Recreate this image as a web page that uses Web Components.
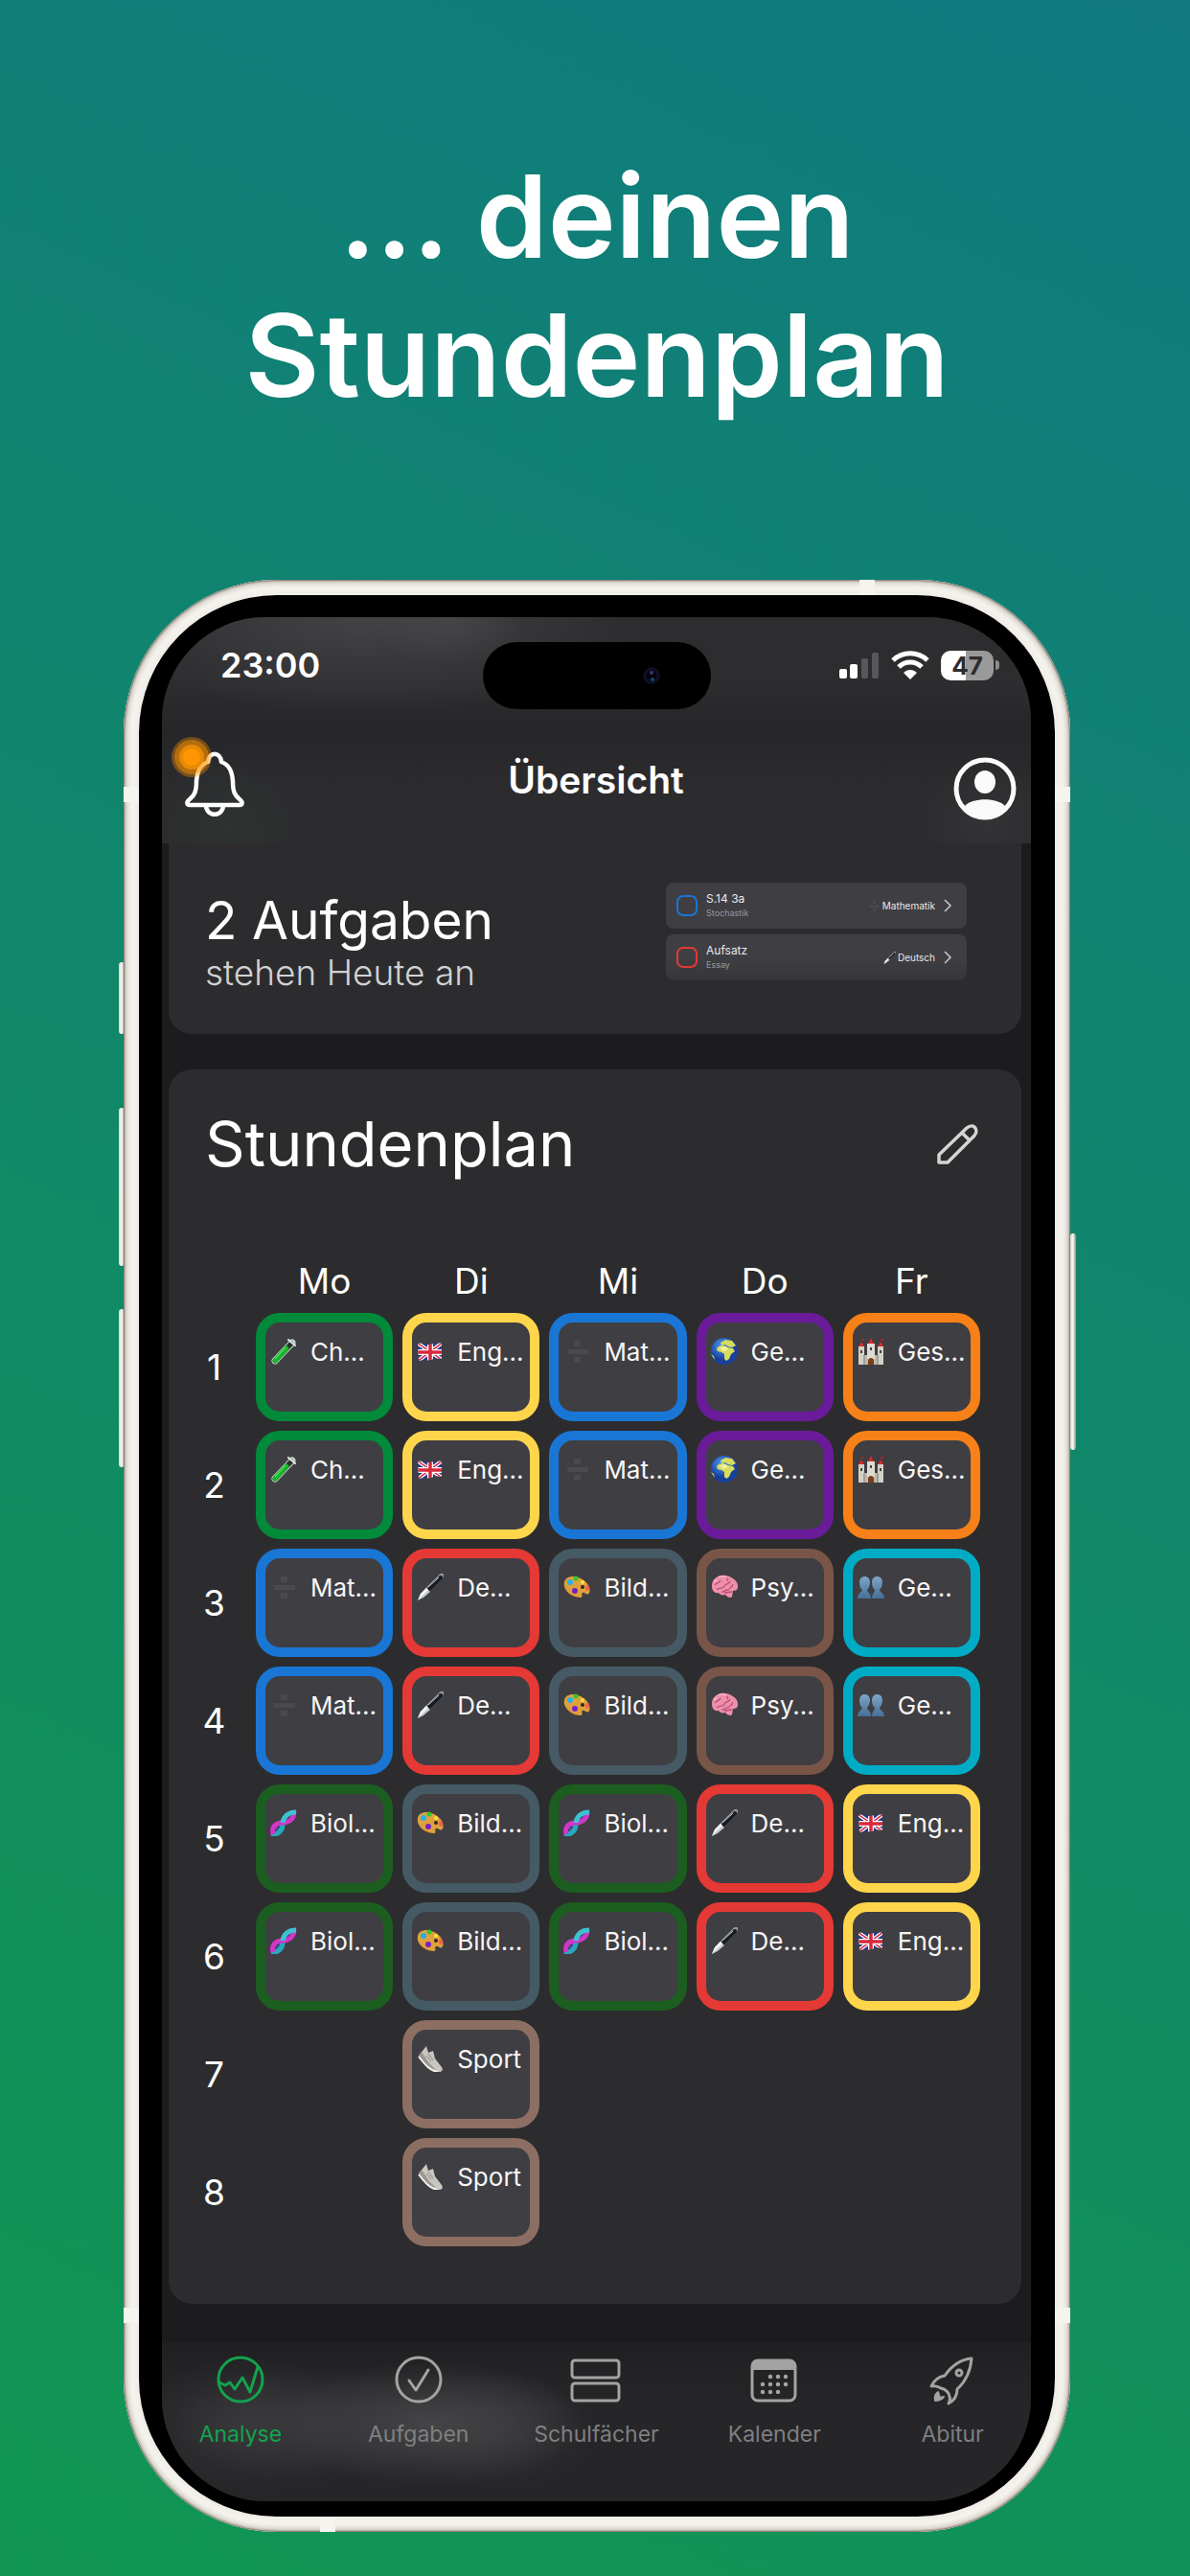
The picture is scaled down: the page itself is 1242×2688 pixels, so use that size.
<!DOCTYPE html>
<html lang="de">
<head>
<meta charset="utf-8">
<meta name="viewport" content="width=device-width, initial-scale=1">
<title>Stundenplan</title>
<style>
  body {
    margin: 0;
    min-height: 100vh;
    background: linear-gradient(205deg, #107a80, #119651);
    color: #fff;
    font-family: Inter, "Liberation Sans", sans-serif;
  }
</style>
</head>
<body>
<promo-page>
  <span slot="title">... deinen<br>Stundenplan</span>
  <phone-frame>
    <app-header page-title="Übersicht" time="23:00" battery="47"></app-header>
    <task-summary count="2"></task-summary>
    <time-table></time-table>
    <tab-bar></tab-bar>
  </phone-frame>
</promo-page>

<script>
// Emoji-artige Fachsymbole, alle auf einem Raster von 28x28
const ICONS = {
  tube: `<path d="M23 5 5 24" stroke="#c4d4c8" stroke-width="7" stroke-linecap="round"/><path d="M22 6 5 24" stroke="#28302b" stroke-width="5" stroke-linecap="round"/><path d="M17 11 5 24" stroke="#12b928" stroke-width="5" stroke-linecap="round"/><path d="M16 10 5 22" stroke="#7ef07c" stroke-width="1"/><path d="m19 2 7 6" stroke="#dfe5e2" stroke-width="2" stroke-linecap="round"/>`,
  flag: `<clipPath id="f"><path d="M1 6c5-2 9 2 13 1s8-2 12-1v16c-5-1-8 0-12 1s-9 0-12 1z"/></clipPath><g clip-path="url(#f)"><path fill="#233a8c" d="M0 3h28v22H0z"/><path d="m0 5 28 19M28 4 0 25" stroke="#fff" stroke-width="4"/><path d="m0 5 28 19M28 4 0 25" stroke="#d8283c" stroke-width="1.5"/><path d="M14 3v22M0 15h28" stroke="#fff" stroke-width="6"/><path d="M14 3v22M0 15h28" stroke="#d8283c" stroke-width="3.5"/></g>`,
  divide: `<path fill="#4a4a4b" d="M4 12h22v5H4zM11 3h7v6h-7zM11 20h7v6h-7z"/>`,
  pen: `<path d="M26 2 10 18" stroke="#8f979c" stroke-width="5" stroke-linecap="round"/><path d="M25 4 13 16" stroke="#181c22" stroke-width="4" stroke-linecap="round"/><path d="M23 4 12 14" stroke="#c4ccd2" stroke-width="1"/><path d="m10 15 4 4-7 6-6 3 3-7z" fill="#c3cbd0"/><path d="m10 15 2 2L1 28l3-7z" fill="#f3f5f6"/>`,
  palette: `<path d="M1 9C2 3 10 1 18 5s11 11 9 15-5-1-7 0 1 5-2 5C10 25-1 18 1 9z" fill="#dfa13d"/><path d="M1 11C2 19 9 25 18 25c-8 1-16-5-17-14z" fill="#a86d20"/><circle cx="20" cy="14" r="2" fill="#33261e"/><circle cx="7" cy="9" r="3" fill="#24b1e8"/><circle cx="13" cy="5" r="2.5" fill="#35c728"/><circle cx="20" cy="9" r="2" fill="#ffe135"/><ellipse cx="25" cy="15" rx="2" ry="3" fill="#f3604f"/><circle cx="12" cy="18" r="3" fill="#7721c5"/>`,
  globe: `<radialGradient id="g" cx=".4" cy=".3"><stop offset="0" stop-color="#4c9af2"/><stop offset="1" stop-color="#173f9c"/></radialGradient><circle cx="14" cy="14" r="14" fill="url(#g)"/><path d="M6 11c1-2 4-3 7-3l5 2 5 1 2 3-4 3-2 5-3 2-2-2v-5l-3-2-4-1zM10 5l5-3 7 1 4 5-4 2-4-1-3-2-4 1zM0 17l3 2 1 4z" fill="#d8dc5c"/><path d="m9 10 6-1 3 3-5 2z" fill="#f4f2a1"/>`,
  castle: `<path d="M1 9h6v19H1zM21 9h6v19h-6z" fill="#d3d0c6"/><path d="M6 18h16v10H6z" fill="#bdbab0"/><path d="M10 6h8v16h-8z" fill="#dedbd2"/><path d="m1 9 3-5 3 5zM21 9l3-5 3 5zM11 6l3-6 3 6z" fill="#d52b2b"/><path d="M4 1h3v2H4zM24 1h3v2h-3z" fill="#a82424"/><path d="M11 28v-4c0-4 6-4 6 0v4z" fill="#7b3f17"/><path d="M3 13h2v3H3zM23 13h2v3h-2zM13 10h2v3h-2z" fill="#42413f"/><path d="M7 18v10M21 18v10" stroke="#86847d"/>`,
  brain: `<path d="M1 13C1 5 8 1 15 2s14 6 13 12c0 3-2 4-5 4l-1 6c-1 2-5 1-7-2-3 1-6 0-7-2-4 1-7-2-7-7z" fill="#ee8fab"/><path d="M4 12c2-3 5-2 6-5m-4 10c2-3 6 0 8-4s5-1 6-5m-9 11c3 1 4-3 8-2m-3-12c2 1 2 2 1 3m6 3c-1 4-3 3-4 5m-5 4c3 0 5-1 8-1" fill="none" stroke="#bd4f78" stroke-width="1.3"/><path d="M8 4c3-2 6-1 8 0M3 9l3-3" stroke="#ffd0db" fill="none"/>`,
  people: `<linearGradient id="p" x2="0" y2="1"><stop stop-color="#7fa6c6"/><stop offset="1" stop-color="#456f98"/></linearGradient><g fill="url(#p)"><path d="M2 9c0-8 11-8 11 0 0 4-2 7-3 8 0 3 4 3 4 9H0c0-5 4-6 5-9C3 16 2 13 2 9z"/><path d="M15 9c0-8 11-8 11 0 0 4-2 7-3 8 0 3 5 3 5 9H15c0-5 3-6 3-9-2-2-3-4-3-8z"/></g>`,
  dna: `<path d="m5 18 5 6M18 5l6 6M8 16l4 5M16 8l5 5" stroke="#5848b4" stroke-width="2"/><path d="M1 26c6 1 12-3 12-10" fill="none" stroke="#25a9bf" stroke-width="5"/><path d="M3 26C1 19 5 14 13 14S25 9 25 2" fill="none" stroke="#d136c8" stroke-width="5"/><path d="M13 14c1-7 6-11 14-11" fill="none" stroke="#3cc3d0" stroke-width="5"/>`,
  shoe: `<path d="m2 11 8-10 2 7 5-2 2 8 7 9c2 3 0 5-3 5-6 0-9-4-13-8z" fill="#c9c5bf"/><path d="m2 11 3-4 8 12 9 9c-7 0-11-6-20-17z" fill="#9b9690"/><path d="M2 12c7 9 12 15 20 16" fill="none" stroke="#f2f0ed" stroke-width="2"/><path d="m12 9 5 7M10 11l5 6" stroke="#8c8882"/>`
};

const svg = (body, size = 28, view = size) =>
  `<svg width="${size}" height="${size}" viewBox="0 0 ${view} ${view}" fill="none" aria-hidden="true">${body}</svg>`;

// Fach -> Kurzname, Symbol, Farbe
const SUBJECTS = {
  ch: ["Ch...", "tube", "#008a3a"],
  en: ["Eng...", "flag", "#ffd54c"],
  ma: ["Mat...", "divide", "#1976d5"],
  geo: ["Ge...", "globe", "#6a1b9a"],
  his: ["Ges...", "castle", "#f78118"],
  de: ["De...", "pen", "#e53935"],
  ku: ["Bild...", "palette", "#455a64"],
  psy: ["Psy...", "brain", "#795548"],
  gem: ["Ge...", "people", "#00acc5"],
  bio: ["Biol...", "dna", "#1b5e20"],
  sp: ["Sport", "shoe", "#8d6e63"]
};

class BaseElement extends HTMLElement {
  constructor() {
    super();
    this.attachShadow({ mode: "open" });
  }
  connectedCallback() {
    this.shadowRoot.innerHTML = this.render();
  }
}

class PromoPage extends BaseElement {
  render() {
    return `
      <style>
        :host { display: block; padding: 153px 125px 44px 129px; }
        h1 {
          margin: 0 0 162px;
          font-size: 120px;
          font-weight: 600;
          line-height: 145px;
          text-align: center;
        }
      </style>
      <h1><slot name="title"></slot></h1>
      <slot></slot>
    `;
  }
}

class PhoneFrame extends BaseElement {
  render() {
    return `
      <style>
        :host { display: block; position: relative; }
        .frame {
          position: relative;
          padding: 16px;
          border-radius: 160px;
          background: #f1eee8;
          box-shadow: inset 0 0 2px 1px #756d63, inset 0 0 7px 4px #c9c2b8, inset 0 0 4px 10px #fbfaf6;
        }
        .bezel {
          padding: 23px 25px 16px 24px;
          border-radius: 144px;
          background: #000;
        }
        .screen {
          display: flex;
          flex-direction: column;
          overflow: hidden;
          border-radius: 108px;
          background: #1c1c1e;
        }
        /* Tasten und Antennenstreifen liegen auf dem Rahmen */
        .key, .band { position: absolute; }
        .key { width: 6px; background: linear-gradient(90deg, #d8d3ca, #fbfaf6, #8e867b); border-radius: 3px; }
        .left { left: -5px; }
        .right { right: -6px; }
        .action { top: 399px; height: 75px; }
        .up { top: 551px; height: 165px; }
        .down { top: 761px; height: 165px; }
        .power { top: 682px; height: 226px; }
        .band { width: 16px; height: 16px; background: #f6f4ef; }
      </style>
      <i class="key left action"></i><i class="key left up"></i><i class="key left down"></i>
      <i class="key right power"></i>
      <div class="frame">
        <i class="band" style="top:0;right:204px"></i>
        <i class="band" style="bottom:0;left:205px"></i>
        <i class="band" style="top:216px;left:0"></i>
        <i class="band" style="top:216px;right:0"></i>
        <i class="band" style="bottom:218px;left:0"></i>
        <i class="band" style="bottom:218px;right:0"></i>
        <div class="bezel"><div class="screen"><slot></slot></div></div>
      </div>
    `;
  }
}

class AppHeader extends BaseElement {
  render() {
    const level = this.getAttribute("battery");
    return `
      <style>
        :host {
          display: block;
          background:
            radial-gradient(circle 70px at 70px 220px, #2d3331, #2d333100),
            radial-gradient(circle 70px at 860px 215px, #333335, #33333500),
            radial-gradient(ellipse 80px 50px at 300px 0, #4c4c4e99, #4c4c4e00),
            radial-gradient(ellipse 280px 100px at 210px 0, #434345, #43434500),
            linear-gradient(#2d2d2f, #2d2d2f 30%, #262628 50%, #2c2c2e 75%);
        }
        .status { display: grid; grid-template-columns: 1fr 238px 1fr; padding: 26px 33px 0; }
        .time { padding-left: 28px; font-size: 36px; font-weight: 600; line-height: 48px; }
        .island { height: 70px; border-radius: 35px; background: #000; display: flex; align-items: center; justify-content: flex-end; }
        .island svg { margin-right: 53px; }
        .signals { display: flex; justify-content: flex-end; align-items: center; gap: 12px; height: 48px; }
        .battery { display: flex; align-items: center; gap: 2px; }
        .level {
          width: 55px; height: 31px; border-radius: 10px;
          background: linear-gradient(90deg, #fff 47%, #9a9a9b 47%);
          color: #2c2c2e; font-size: 26px; font-weight: 700; line-height: 31px; text-align: center;
        }
        .nub { width: 4px; height: 10px; border-radius: 0 5px 5px 0; background: #8d8d8e; }
        nav { display: flex; justify-content: space-between; padding: 40px 10px 24px 9px; }
        button { display: flex; padding: 0; border: 0; background: none; }
        button svg { overflow: visible; }
        h2 { margin: 0; font-size: 39px; font-weight: 600; line-height: 68px; }
      </style>
      <div class="status">
        <time class="time">${this.getAttribute("time")}</time>
        <div class="island">${svg(`<circle cx="9" cy="9" r="9" fill="#0d0d23"/><circle cx="9" cy="9" r="5" fill="#03030c"/><circle cx="9" cy="6" r="2" fill="#34366e"/><circle cx="10" cy="13" r="2" fill="#174a5c"/>`, 18)}</div>
        <div class="signals">
          <svg width="42" height="30" viewBox="0 0 42 30" aria-label="Empfang"><g fill="#fff"><rect x="0" y="19" width="8" height="10" rx="2"/><rect x="11" y="14" width="8" height="15" rx="2"/></g><g fill="#58585a"><rect x="23" y="8" width="7" height="21" rx="2"/><rect x="34" y="2" width="7" height="27" rx="2"/></g></svg>
          <svg width="40" height="30" viewBox="0 0 40 30" fill="none" stroke="#fff" stroke-width="5" aria-label="WLAN"><path d="M2 10a26 26 0 0 1 36 0M8 17a17 17 0 0 1 24 0"/><path d="M20 30l-7-7c4-4 10-4 14 0z" fill="#fff" stroke="none"/></svg>
          <div class="battery"><div class="level">${level}</div><i class="nub"></i></div>
        </div>
      </div>
      <nav>
        <button aria-label="Mitteilungen">${svg(`<path d="M39 15C40 4 52 4 53 15c8 3 11 9 12 20 0 11 2 15 7 19 4 3 3 6 0 6H20c-3 0-4-3 0-6 5-4 7-8 7-19 1-11 4-17 12-20zM37 60c0 13 18 13 18 0" stroke="#fff" stroke-width="4.5" stroke-linejoin="round"/><g fill="#ff9500"><circle cx="22" cy="10" r="21" opacity=".35"/><circle cx="22" cy="10" r="18" opacity=".45"/><circle cx="22" cy="10" r="13" opacity=".7"/><circle cx="22" cy="10" r="9"/></g>`, 76)}</button>
        <h2>${this.getAttribute("page-title")}</h2>
        <button aria-label="Profil">${svg(`<circle cx="38" cy="43" r="30" stroke="#fafafa" stroke-width="5"/><ellipse cx="38" cy="36" rx="11" ry="12" fill="#fafafa"/><path d="M17 61c8-9 34-9 42 0-9 15-33 15-42 0z" fill="#fafafa"/>`, 76)}</button>
      </nav>
    `;
  }
}

class TaskItem extends BaseElement {
  render() {
    const icon = this.getAttribute("icon");
    return `
      <style>
        :host {
          display: flex; align-items: center; box-sizing: border-box;
          height: 48px; padding: 0 15px 0 11px;
          border-radius: 8px; background: #3f3e43;
        }
        :host([faded]) { background: linear-gradient(#3f3e43 50%, #363638); }
        input { appearance: none; width: 22px; height: 22px; margin: 0; border: 2px solid var(--color); border-radius: 7px; }
        label { flex: 1; margin-left: 9px; font-size: 12px; line-height: 15px; color: #e8e8e9; }
        small { display: block; font-size: 9px; color: #9a9a9d; }
        .subject { display: flex; align-items: center; gap: 2px; margin-right: 9px; font-size: 10px; line-height: 16px; color: #e8e8e9; }
      </style>
      <input type="checkbox" id="done">
      <label for="done">${this.getAttribute("name")}<small>${this.getAttribute("topic")}</small></label>
      <span class="subject">${svg(ICONS[icon], 13, 28)}<slot></slot></span>
      <svg width="9" height="14" viewBox="0 0 9 14" fill="none" stroke="#c8c8ca" stroke-width="1.5"><path d="m1 1 6 6-6 6"/></svg>
    `;
  }
}

class TaskSummary extends BaseElement {
  render() {
    return `
      <style>
        :host {
          display: flex; justify-content: space-between;
          margin: 0 10px 37px 7px; padding: 41px 57px 38px 38px;
          border-radius: 0 0 24px 24px; background: #2c2c2e;
        }
        .text { padding-top: 10px; }
        h3, p { margin: 0; font-weight: 400; }
        h3 { font-size: 55px; line-height: 58px; }
        p { font-size: 37px; font-weight: 300; line-height: 52px; color: #d2d2d3; }
        .list { display: flex; flex-direction: column; gap: 6px; width: 314px; }
      </style>
      <div class="text">
        <h3>${this.getAttribute("count")} Aufgaben</h3>
        <p>stehen Heute an</p>
      </div>
      <div class="list">
        <task-item name="S.14 3a" topic="Stochastik" icon="divide" style="--color:#1976d5">Mathematik</task-item>
        <task-item faded name="Aufsatz" topic="Essay" icon="pen" style="--color:#e53935">Deutsch</task-item>
      </div>
    `;
  }
}

class SubjectCell extends BaseElement {
  render() {
    return `
      <style>
        :host {
          display: flex; align-items: flex-start; gap: 14px; box-sizing: border-box;
          height: 113px; padding: 15px 0 0 5px;
          border: 10px solid var(--color); border-radius: 25px;
          background: #3f3e43; color: #f5f5f6;
          font-size: 26px; font-weight: 400; line-height: 32px; white-space: nowrap;
        }
        svg { flex: none; margin-top: 1px; }
      </style>
      ${svg(ICONS[this.getAttribute("icon")])}<span><slot></slot></span>
    `;
  }
}

class TimeTable extends BaseElement {
  render() {
    const plan = [
      ["ch", "en", "ma", "geo", "his"],
      ["ch", "en", "ma", "geo", "his"],
      ["ma", "de", "ku", "psy", "gem"],
      ["ma", "de", "ku", "psy", "gem"],
      ["bio", "ku", "bio", "de", "en"],
      ["bio", "ku", "bio", "de", "en"],
      ["", "sp", "", "", ""],
      ["", "sp", "", "", ""]
    ];
    const cell = (key) => {
      if (!key) return "<td></td>";
      const [name, icon, color] = SUBJECTS[key];
      return `<td><subject-cell icon="${icon}" style="--color:${color}">${name}</subject-cell></td>`;
    };
    return `
      <style>
        :host { display: block; margin: 0 10px 40px 7px; padding: 38px 0 50px; border-radius: 24px; background: #2c2c2e; }
        header { display: flex; justify-content: space-between; align-items: center; margin-bottom: 70px; padding: 0 45px 0 38px; }
        h3 { margin: 0; font-size: 65px; font-weight: 400; line-height: 80px; }
        button { display: flex; padding: 0; border: 0; background: none; }
        .wrap { padding: 0 33px 0 4px; }
        table { width: 100%; table-layout: fixed; border-spacing: 10px; }
        th, td { padding: 0; }
        th { font-size: 37px; font-weight: 400; }
        thead th { height: 46px; line-height: 46px; }
        thead th:first-child { width: 67px; }
        td { height: 113px; }
      </style>
      <header>
        <h3>Stundenplan</h3>
        <button aria-label="Bearbeiten">${svg(`<path d="M3 41v-8L32 5c7-6 13 2 8 8L12 41zM27 10l8 8" stroke="#d5d5d5" stroke-width="3.5" stroke-linejoin="round"/>`, 44)}</button>
      </header>
      <div class="wrap">
        <table>
          <thead><tr><th></th>${["Mo", "Di", "Mi", "Do", "Fr"].map((d) => `<th scope="col">${d}</th>`).join("")}</tr></thead>
          <tbody>${plan.map((row, i) => `<tr><th scope="row">${i + 1}</th>${row.map(cell).join("")}</tr>`).join("")}</tbody>
        </table>
      </div>
    `;
  }
}

class TabBar extends BaseElement {
  render() {
    const tabs = [
      ["Analyse", `<circle cx="26" cy="26" r="23"/><path d="m4 29 6 3 5-3 5 7 8-12 8 15 8-26"/>`],
      ["Aufgaben", `<circle cx="26" cy="26" r="23"/><path d="m16 27 7 10 13-21" stroke-linecap="round"/>`],
      ["Schulfächer", `<rect x="1" y="6" width="49" height="18" rx="3"/><rect x="1" y="30" width="49" height="18" rx="3"/>`],
      ["Kalender", `<rect x="3" y="6" width="45" height="42" rx="6"/><path d="M3 13c0-5 3-8 7-8h31c4 0 7 3 7 8v3H3z" fill="currentColor" stroke="none"/><path d="M22 23h19M14 31h27M14 39h19" stroke-width="4.5" stroke-linecap="round" stroke-dasharray="0 8"/>`],
      ["Abitur", `<path d="M46 4C34 5 25 12 18 22c-7 1-11 5-14 11 4-1 7 0 10 2 5 1 9 5 9 9 1 2 1 4-1 7 6-3 9-8 9-15C41 27 45 17 46 4z"/><circle cx="33" cy="19" r="3"/><path d="M11 39c-3 2-4 5-3 9 4 0 7-1 9-4l-4 1z" stroke-width="2" fill="currentColor"/>`]
    ];
    return `
      <style>
        :host {
          display: block;
          height: 166px;
          background:
            radial-gradient(ellipse 120px 70px at 90px 85px, #42424488, #42424400),
            radial-gradient(ellipse 150px 60px at 160px 85px, #42424488, #42424400),
            radial-gradient(ellipse 160px 65px at 280px 85px, #454547, #45454700),
            radial-gradient(ellipse 100px 60px at 350px 90px, #42424488, #42424400),
            linear-gradient(#202022, #262628 40%);
        }
        nav { display: grid; grid-template-columns: repeat(5, 1fr); margin: 0 -11px; }
        a {
          display: flex; flex-direction: column; align-items: center; gap: 17px;
          padding-top: 13px;
          color: #7f7f81; text-decoration: none;
          font-size: 23px; font-weight: 400; line-height: 28px;
        }
        svg { color: #a3a3a4; stroke: currentColor; stroke-width: 3; stroke-linejoin: round; overflow: visible; }
        a.active, .active svg { color: #14a24e; }
      </style>
      <nav>
        ${tabs.map(([name, icon], i) => `<a href="#${name}"${i ? "" : ' class="active" aria-current="page"'}>${svg(icon, 52)}${name}</a>`).join("")}
      </nav>
    `;
  }
}

customElements.define("promo-page", PromoPage);
customElements.define("phone-frame", PhoneFrame);
customElements.define("app-header", AppHeader);
customElements.define("task-item", TaskItem);
customElements.define("task-summary", TaskSummary);
customElements.define("subject-cell", SubjectCell);
customElements.define("time-table", TimeTable);
customElements.define("tab-bar", TabBar);
</script>
</body>
</html>
